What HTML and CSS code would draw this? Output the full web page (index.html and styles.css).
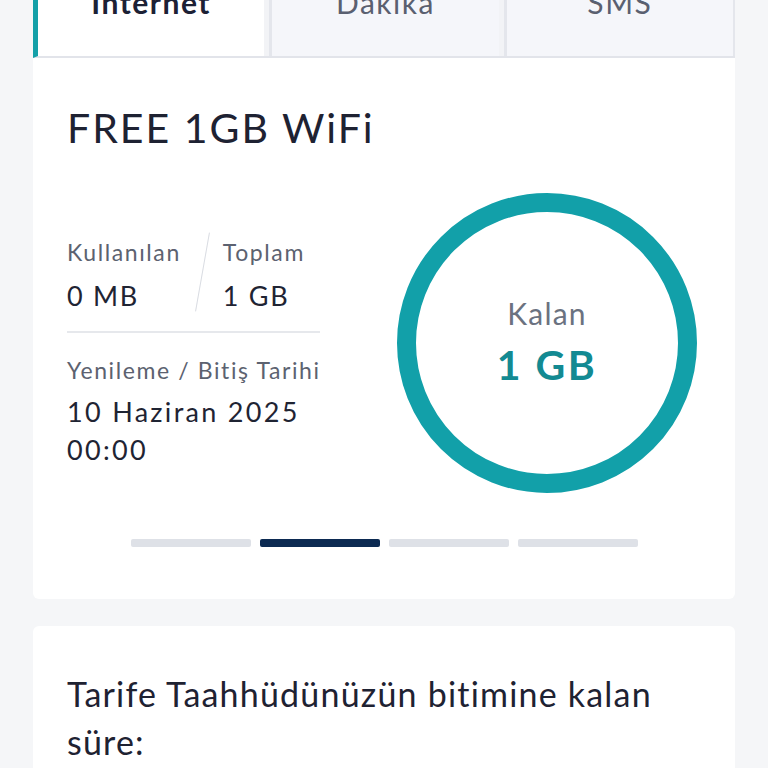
FILE: index.html
```html
<!DOCTYPE html>
<html lang="tr">
<head>
<meta charset="utf-8">
<link rel="stylesheet" href="styles.css">
</head>
<body>
<div class="page">
  <div class="tabs">
    <div class="tab active">Internet</div>
    <div class="tab">Dakika</div>
    <div class="tab">SMS</div>
  </div>
  <div class="card usage">
    <h1 class="title">FREE 1GB WiFi</h1>
    <div class="usage-body">
      <div class="stats">
        <div class="pair">
          <div class="stat">
            <div class="label">Kullanılan</div>
            <div class="value">0 MB</div>
          </div>
          <div class="slash"></div>
          <div class="stat">
            <div class="label">Toplam</div>
            <div class="value">1 GB</div>
          </div>
        </div>
        <div class="divider"></div>
        <div class="label">Yenileme / Bitiş Tarihi</div>
        <div class="value date">10 Haziran 2025<br>00:00</div>
      </div>
      <div class="ring">
        <div class="ring-label">Kalan</div>
        <div class="ring-value">1 GB</div>
      </div>
    </div>
    <div class="dots">
      <span class="dot"></span>
      <span class="dot on"></span>
      <span class="dot"></span>
      <span class="dot"></span>
    </div>
  </div>
  <div class="card commit">
    <p class="commit-text">Tarife Taahhüdünüzün bitimine kalan süre:</p>
  </div>
</div>
</body>
</html>
```
FILE: styles.css
```css
html, body {
  margin: 0;
  padding: 0;
  background: #f5f6f8;
  font-family: "Lato", "Open Sans", sans-serif;
  color: #1f2433;
}
.page {
  width: 702px;
  margin: 0 auto 0 33px;
}
.tabs {
  display: flex;
  margin-top: -52px;
  height: 108px;
  border-bottom: 2px solid #e2e4ea;
  border-left: 5px solid #14a0a8;
  background: #f2f3f6;
}
.tab {
  flex: 1;
  display: flex;
  align-items: center;
  justify-content: center;
  font-size: 30px;
  letter-spacing: 1.5px;
  color: #5a6070;
  background: #f5f6fa;
  border-left: 3px solid #e4e6ec;
  margin-left: 5px;
}
.tab:last-child {
  border-right: 2px solid #e4e6ec;
}
.tab.active {
  background: #fff;
  color: #1c2135;
  font-weight: 700;
  border-left: none;
  margin-left: 0;
}
.card {
  background: #fff;
  border-radius: 0 0 6px 6px;
}
.usage {
  padding: 44px 34px 52px;
}
.title {
  margin: 0;
  font-size: 41px;
  letter-spacing: 2px;
  font-weight: 400;
  line-height: 52px;
  color: #1e2232;
}
.usage-body {
  display: flex;
  justify-content: space-between;
  align-items: flex-start;
  margin-top: 39px;
}
.stats {
  width: 253px;
  padding-top: 43px;
  white-space: nowrap;
}
.pair {
  display: flex;
  align-items: flex-start;
}
.slash {
  width: 1px;
  height: 80px;
  margin: -4px 20px 0 21px;
  background: #d9dce2;
  transform: rotate(10deg);
}
.label {
  font-size: 23px;
  letter-spacing: 1.6px;
  line-height: 32px;
  color: #5c6270;
}
.value {
  font-size: 27px;
  letter-spacing: 1.7px;
  line-height: 40px;
  color: #1f2433;
  margin-top: 8px;
}
.date {
  margin-top: 7px;
  line-height: 38px;
  letter-spacing: 2.3px;
}
.divider {
  height: 2px;
  background: #e6e8ec;
  margin: 15px 0 21px;
}
.ring {
  width: 262px;
  height: 262px;
  border: 19px solid #12a0a9;
  border-radius: 50%;
  display: flex;
  flex-direction: column;
  align-items: center;
  justify-content: center;
  margin-right: 4px;
}
.ring-label {
  font-size: 30px;
  letter-spacing: 1.2px;
  line-height: 40px;
  color: #6b7280;
  margin-top: -2px;
}
.ring-value {
  font-size: 41px;
  letter-spacing: 2.5px;
  line-height: 52px;
  font-weight: 700;
  color: #138a92;
  margin-top: 6px;
}
.dots {
  display: flex;
  justify-content: center;
  gap: 9px;
  margin-top: 46px;
}
.dot {
  width: 120px;
  height: 8px;
  border-radius: 2px;
  background: #dee1e7;
}
.dot.on {
  background: #0c2a52;
}
.commit {
  margin-top: 27px;
  border-radius: 6px;
  padding: 44px 34px 40px;
}
.commit-text {
  margin: 0;
  font-size: 34px;
  letter-spacing: 1.2px;
  line-height: 48px;
  color: #1e2232;
  width: 620px;
}
```
